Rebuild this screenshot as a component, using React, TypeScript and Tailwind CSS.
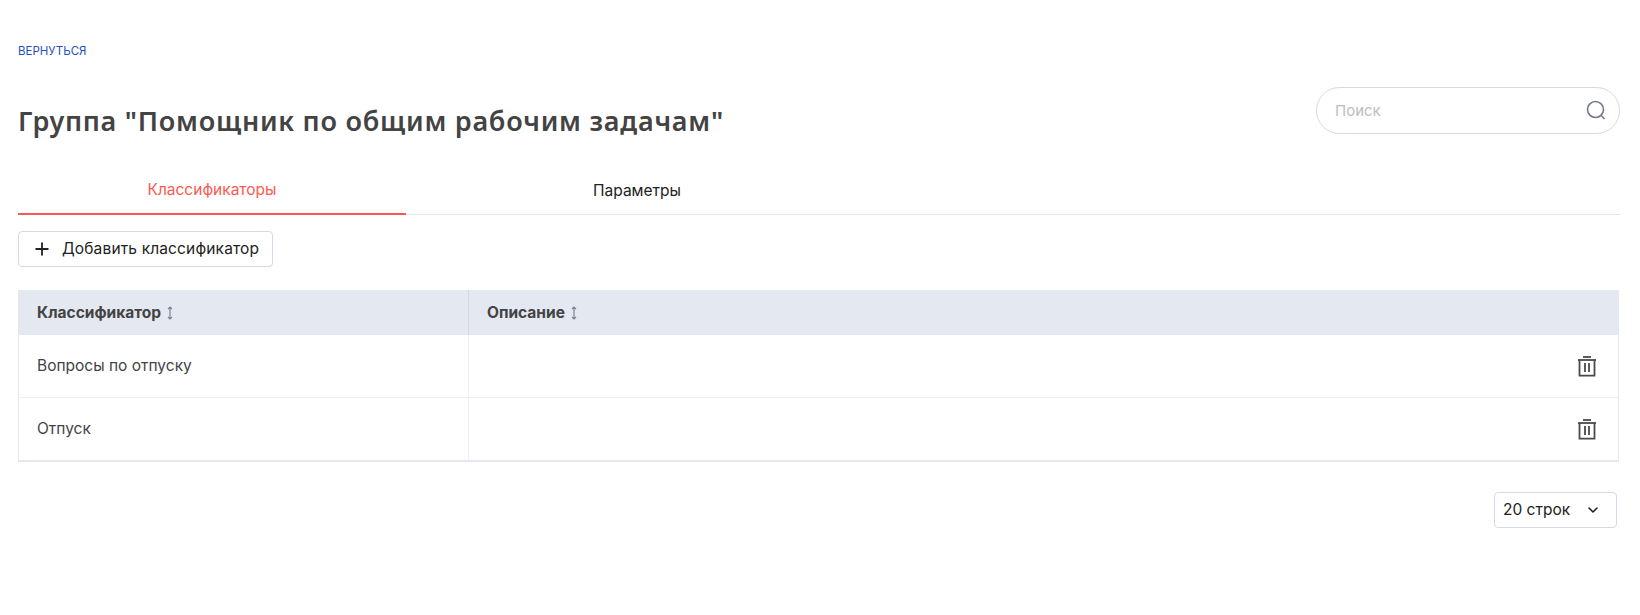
import { ChevronDown, Plus } from 'lucide-react';

const rows = ['Вопросы по отпуску', 'Отпуск'];

function SortIcon() {
  return (
    <svg width="8" height="14" viewBox="0 0 8 14" fill="none" stroke="#7b8494" strokeWidth="1.2" className="ml-[5px] mt-[1px]">
      <path d="M4 1v12M2 3l2-2 2 2M2 11l2 2 2-2" />
    </svg>
  );
}

function TrashIcon() {
  return (
    <svg width="18" height="21" viewBox="0 0 18 21" fill="none" stroke="#4a4a4a" strokeWidth="1.8">
      <path d="M5 1h8" />
      <path d="M0 4h18" />
      <path d="M1.5 4v15.6h15V4" />
      <path d="M7 7v9M11 7v9" />
    </svg>
  );
}

export default function App() {
  return (
    <div className="w-[1640px] h-[615px] bg-white px-[18px] pt-[44px] font-['Inter',sans-serif]">
      <a className="block text-[11.5px] leading-[14px] text-[#1f4fc6]">ВЕРНУТЬСЯ</a>

      <div className="flex justify-between items-start mt-[29px]">
        <h1 className="mt-[16px] font-['Noto_Sans',sans-serif] text-[27px] leading-[36px] font-semibold text-[#434343] tracking-[0.75px]">
          Группа "Помощник по общим рабочим задачам"
        </h1>
        <div className="w-[304px] h-[47px] mr-[2px] border border-[#d5d9e5] rounded-[24px] flex items-center justify-between pl-[18px] pr-[12px]">
          <span className="text-[15px] pt-[1px] text-[#bdbdbd]">Поиск</span>
          <svg width="22" height="22" viewBox="0 0 22 22" fill="none" stroke="#737b8c" strokeWidth="1.6">
            <circle cx="10.5" cy="9.5" r="8" />
            <path d="M16 15.5l3.5 3.5" />
          </svg>
        </div>
      </div>

      <div className="flex border-b border-[#e3e7f0] mt-[26px] mr-[2px] h-[50px]">
        <div className="w-[388px] -mb-px flex items-center justify-center pt-[2px] border-b-2 border-[#fb5a52] text-[15.5px] text-[#fb5a52]">
          Классификаторы
        </div>
        <div className="w-[462px] flex items-center justify-center pt-[2px] text-[15.5px] text-[#222222]">Параметры</div>
      </div>

      <button className="mt-[16px] w-[255px] h-[36px] flex items-center pl-[13px] border border-[#d5d9e5] rounded-[4px] text-[15.5px] tracking-[0.15px] text-[#222222]">
        <Plus size={20} strokeWidth={2.2} className="mr-[10px] text-[#222222]" />
        Добавить классификатор
      </button>

      <div className="mt-[23px] mr-[3px] border-x border-b-2 border-[#e3e7f0]">
        <div className="flex h-[45px] -mx-px bg-[#e4e8f1] text-[15.5px] font-bold text-[#434343]">
          <div className="w-[451px] flex items-center pl-[19px] border-r border-[#d3d8e4]">
            Классификатор
            <SortIcon />
          </div>
          <div className="flex-1 flex items-center pl-[18px]">
            Описание
            <SortIcon />
          </div>
        </div>
        {rows.map((name, i) => (
          <div key={name} className={`flex text-[15.5px] text-[#434343] ${i === 0 ? 'h-[63px] border-b border-[#eef0f5]' : 'h-[62px]'}`}>
            <div className="w-[450px] flex items-center pl-[18px] pb-[1px] border-r border-[#eef0f5]">{name}</div>
            <div className="flex-1 flex items-center justify-end pr-[22px]">
              <TrashIcon />
            </div>
          </div>
        ))}
      </div>

      <div className="flex justify-end mt-[30px] mr-[5px]">
        <div className="w-[123px] h-[36px] flex items-center justify-between pl-[8px] pr-[15px] border border-[#d5d9e5] rounded-[4px] text-[15.5px] text-[#222222]">
          20 строк
          <ChevronDown size={16} strokeWidth={2.4} />
        </div>
      </div>
    </div>
  );
}
